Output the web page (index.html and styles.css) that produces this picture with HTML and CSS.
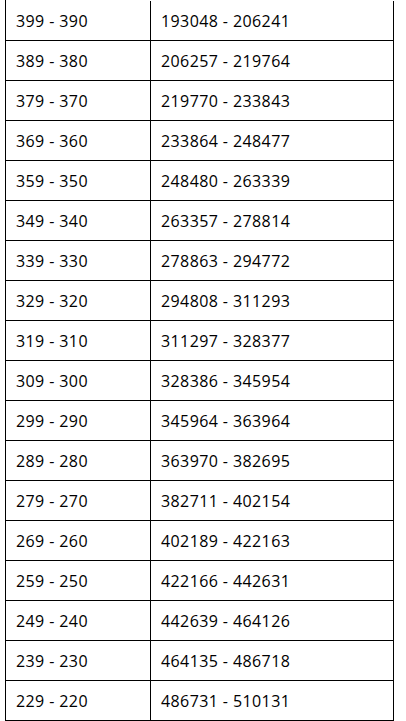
FILE: index.html
```html
<!DOCTYPE html>
<html>
<head>
<meta charset="utf-8">
<link rel="stylesheet" href="styles.css">
</head>
<body>
<div class="grid">
  <div class="row"><div class="cell c1">399 - 390</div><div class="cell c2">193048 - 206241</div></div>
  <div class="row"><div class="cell c1">389 - 380</div><div class="cell c2">206257 - 219764</div></div>
  <div class="row"><div class="cell c1">379 - 370</div><div class="cell c2">219770 - 233843</div></div>
  <div class="row"><div class="cell c1">369 - 360</div><div class="cell c2">233864 - 248477</div></div>
  <div class="row"><div class="cell c1">359 - 350</div><div class="cell c2">248480 - 263339</div></div>
  <div class="row"><div class="cell c1">349 - 340</div><div class="cell c2">263357 - 278814</div></div>
  <div class="row"><div class="cell c1">339 - 330</div><div class="cell c2">278863 - 294772</div></div>
  <div class="row"><div class="cell c1">329 - 320</div><div class="cell c2">294808 - 311293</div></div>
  <div class="row"><div class="cell c1">319 - 310</div><div class="cell c2">311297 - 328377</div></div>
  <div class="row"><div class="cell c1">309 - 300</div><div class="cell c2">328386 - 345954</div></div>
  <div class="row"><div class="cell c1">299 - 290</div><div class="cell c2">345964 - 363964</div></div>
  <div class="row"><div class="cell c1">289 - 280</div><div class="cell c2">363970 - 382695</div></div>
  <div class="row"><div class="cell c1">279 - 270</div><div class="cell c2">382711 - 402154</div></div>
  <div class="row"><div class="cell c1">269 - 260</div><div class="cell c2">402189 - 422163</div></div>
  <div class="row"><div class="cell c1">259 - 250</div><div class="cell c2">422166 - 442631</div></div>
  <div class="row"><div class="cell c1">249 - 240</div><div class="cell c2">442639 - 464126</div></div>
  <div class="row"><div class="cell c1">239 - 230</div><div class="cell c2">464135 - 486718</div></div>
  <div class="row"><div class="cell c1">229 - 220</div><div class="cell c2">486731 - 510131</div></div>
</div>
</body>
</html>
```
FILE: styles.css
```css
html, body {
  margin: 0;
  padding: 0;
  background: #fff;
  overflow: hidden;
}
body {
  font-family: "Open Sans", "Liberation Sans", sans-serif;
  font-size: 16px;
  color: #000;
}
.grid {
  margin-left: 5px;
  width: 389px;
  padding-top: 1px;
  border-left: 1px solid #000;
  box-sizing: border-box;
}
.row {
  display: grid;
  grid-template-columns: 145px 1fr;
  height: 40px;
}
.cell {
  box-sizing: border-box;
  height: 40px;
  border-right: 1px solid #000;
  border-bottom: 1px solid #000;
  display: flex;
  align-items: center;
  padding: 1px 0 0 10px;
  letter-spacing: 0.4px;
  white-space: nowrap;
}
```
